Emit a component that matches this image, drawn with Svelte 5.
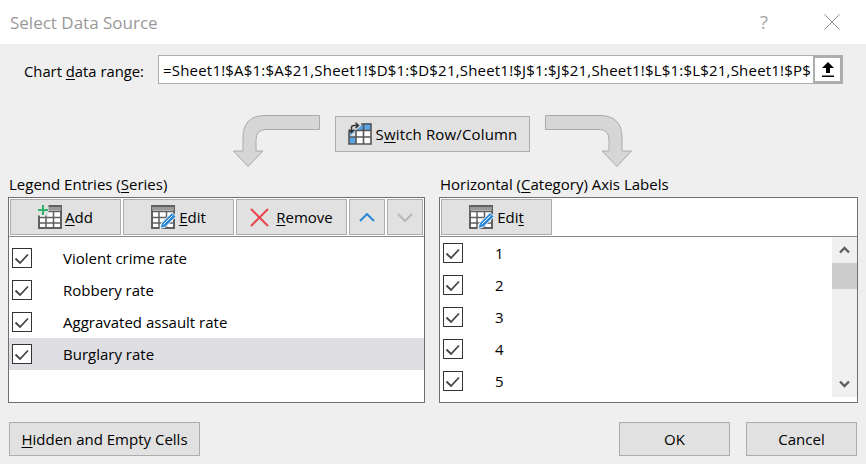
<script>
  const series = ["Violent crime rate", "Robbery rate", "Aggravated assault rate", "Burglary rate"];
  const labels = [1, 2, 3, 4, 5];
  const range = "=Sheet1!$A$1:$A$21,Sheet1!$D$1:$D$21,Sheet1!$J$1:$J$21,Sheet1!$L$1:$L$21,Sheet1!$P$";
</script>

{#snippet check()}
  <svg class="check" width="20" height="20" viewBox="0 0 20 20">
    <rect x="0.5" y="0.5" width="19" height="19" fill="#fff" stroke="#333" />
    <path d="M3.5 10.5 L8 15 L16 6.5" fill="none" stroke="#444" stroke-width="1.8" />
  </svg>
{/snippet}

{#snippet tableIcon()}
  <rect x="1" y="1" width="22" height="22" fill="#fff" stroke="#606060" stroke-width="2" />
  <rect x="1" y="2" width="22" height="3.5" fill="#9a9a9a" />
  <path d="M1 6.5 H23 M1 12.5 H23 M1 18 H23 M8 6 V23 M15.5 6 V23" stroke="#606060" stroke-width="1.5" fill="none" />
{/snippet}

{#snippet pencil()}
  <path d="M9 23.5 L10.5 18 L21 7.5 L25 11.5 L14.5 22 Z" fill="#2b88d8" stroke="#fff" stroke-width="1" />
  <path d="M12.5 19.5 L21.5 10.5" stroke="#fff" stroke-width="1" />
{/snippet}

<div class="dialog">
  <div class="title">
    <span class="title-text">Select Data Source</span>
    <span class="help">?</span>
    <svg class="close" width="16" height="16" viewBox="0 0 16 16">
      <path d="M.5 .5 L15.5 15.5 M15.5 .5 L.5 15.5" stroke="#8c8c8c" fill="none" />
    </svg>
  </div>

  <div class="range-row">
    <span class="range-label">Chart <u>d</u>ata range:</span>
    <div class="range-box">
      <div class="range-text">{range}</div>
      <div class="range-btn">
        <svg width="12" height="15" viewBox="0 0 12 15">
          <path d="M6 0 L12 6 H8 V11 H4 V6 H0 Z" fill="#000" />
          <rect x="0" y="13.5" width="12" height="1.5" fill="#000" />
        </svg>
      </div>
    </div>
  </div>

  <div class="switch-row">
    <svg width="87" height="52" viewBox="0 0 87 52">
      <path d="M86.5 .5 H32 Q10 .5 10 23 V36 H.5 L15 51.5 L30 36 H23 V25 Q23 14.5 33 14.5 H86.5 Z" fill="#d6d6d6" stroke="#aaa" />
    </svg>
    <div class="btn switch-btn">
      <svg width="24" height="24" viewBox="0 0 24 24">
        <rect x="8" y="8" width="15" height="14" fill="#fff" />
        <rect x="1" y="15" width="7" height="7" fill="#5aa5e6" />
        <path d="M1 15 V8 H8 Z" fill="#5aa5e6" />
        <rect x="15.5" y="1" width="7.5" height="7" fill="#5aa5e6" />
        <path d="M15.5 1 V8 H8.5 Z" fill="#5aa5e6" />
        <path d="M1 9 V22 H23 V2 H13 M8 8 V22 M15.5 2 V22 M1 15 H23 M8 8.5 H23" stroke="#555" stroke-width="1.6" fill="none" />
        <path d="M3.5 10 V5.5 Q3.5 3.5 6 3.5 H10 M7.5 .8 L10.5 3.5 L7.5 6.2 M.8 7.5 L3.5 10.5 L6.2 7.5" stroke="#333" stroke-width="1.5" fill="none" />
      </svg>
      <span class="switch-label">S<u>w</u>itch Row/Column</span>
    </div>
    <svg width="87" height="52" viewBox="0 0 87 52">
      <path d="M.5 .5 H55 Q77 .5 77 23 V36 H86.5 L72 51.5 L57 36 H64 V25 Q64 14.5 54 14.5 H.5 Z" fill="#d6d6d6" stroke="#aaa" />
    </svg>
  </div>

  <div class="panels">
    <section class="left">
      <div class="heading">Legend Entries (<u>S</u>eries)</div>
      <div class="panel">
        <div class="toolbar">
          <div class="btn tool">
            <svg width="24" height="24" viewBox="0 0 24 24">
              {@render tableIcon()}
              <rect x="0" y="0" width="10.5" height="10.5" fill="#e1e1e1" />
              <path d="M5 0 V10 M0 5 H10" stroke="#2fb26a" stroke-width="2" />
            </svg>
            <span><u>A</u>dd</span>
          </div>
          <div class="btn tool">
            <svg width="25" height="24" viewBox="0 0 25 24">
              {@render tableIcon()}
              {@render pencil()}
            </svg>
            <span><u>E</u>dit</span>
          </div>
          <div class="btn tool">
            <svg width="19" height="19" viewBox="0 0 19 19">
              <path d="M1 1 L18 18 M18 1 L1 18" stroke="#e8484d" stroke-width="2" fill="none" />
            </svg>
            <span class="remove"><u>R</u>emove</span>
          </div>
          <div class="btn tiny">
            <svg width="16" height="9" viewBox="0 0 16 9">
              <path d="M1 8 L8 1 L15 8" stroke="#2b88d8" stroke-width="2" fill="none" />
            </svg>
          </div>
          <div class="btn tiny">
            <svg width="16" height="9" viewBox="0 0 16 9">
              <path d="M1 1 L8 8 L15 1" stroke="#b9b9b9" stroke-width="2" fill="none" />
            </svg>
          </div>
        </div>
        <div class="list series">
          {#each series as name, i}
            <div class="row" class:selected={i === 3}>
              {@render check()}
              <span class="name">{name}</span>
            </div>
          {/each}
        </div>
      </div>
    </section>

    <section class="right">
      <div class="heading">Horizontal (<u>C</u>ategory) Axis Labels</div>
      <div class="panel">
        <div class="toolbar">
          <div class="btn tool">
            <svg width="25" height="24" viewBox="0 0 25 24">
              {@render tableIcon()}
              {@render pencil()}
            </svg>
            <span>Edi<u>t</u></span>
          </div>
        </div>
        <div class="list-wrap">
          <div class="list labels">
            {#each labels as n}
              <div class="row">
                {@render check()}
                <span class="num">{n}</span>
              </div>
            {/each}
          </div>
          <div class="scrollbar">
            <div class="arrow">
              <svg width="11" height="8" viewBox="0 0 11 8">
                <path d="M1 6.5 L5.5 2 L10 6.5" stroke="#5f5f5f" stroke-width="2.4" fill="none" />
              </svg>
            </div>
            <div class="thumb"></div>
            <div class="arrow down">
              <svg width="11" height="8" viewBox="0 0 11 8">
                <path d="M1 1.5 L5.5 6 L10 1.5" stroke="#5f5f5f" stroke-width="2.4" fill="none" />
              </svg>
            </div>
          </div>
        </div>
      </div>
    </section>
  </div>

  <div class="footer">
    <div class="btn hidden-btn"><span><u>H</u>idden and Empty Cells</span></div>
    <div class="actions">
      <div class="btn action">OK</div>
      <div class="btn action">Cancel</div>
    </div>
  </div>
</div>

<style>
  :global(body) {
    margin: 0;
    background: #efefef;
  }

  .dialog {
    width: 866px;
    height: 464px;
    background: #efefef;
    color: #000;
    font-family: "Open Sans", "Noto Sans", sans-serif;
    font-size: 15px;
    overflow: hidden;
  }

  u {
    text-underline-offset: 2px;
  }

  .title {
    height: 44px;
    background: #fff;
    display: flex;
    align-items: center;
    padding: 0 26px 0 10px;
  }

  .title-text {
    flex: 1;
    font-size: 17px;
    color: #999;
  }

  .help {
    font-size: 19px;
    color: #a6a6a6;
    margin-right: 56px;
  }

  .range-row {
    display: flex;
    align-items: center;
    padding: 11px 23px 0 24px;
  }

  .range-label {
    width: 134px;
    padding-top: 3px;
    font-size: 14.8px;
  }

  .range-box {
    flex: 1;
    height: 29px;
    box-sizing: border-box;
    background: #fff;
    border: 1px solid #adadad;
    display: flex;
    align-items: center;
  }

  .range-text {
    flex: 1;
    padding-left: 4px;
    white-space: nowrap;
    overflow: hidden;
    min-width: 0;
    letter-spacing: 0.2px;
  }

  .range-btn {
    width: 29px;
    height: 27px;
    box-sizing: border-box;
    border: 2px solid #adadad;
    background: #fff;
    display: flex;
    align-items: center;
    justify-content: center;
  }

  .btn {
    background: #e1e1e1;
    border: 1px solid #adadad;
    box-sizing: border-box;
    display: flex;
    align-items: center;
    justify-content: center;
  }

  .switch-row {
    display: flex;
    justify-content: center;
    align-items: flex-start;
    gap: 15px;
    padding: 31px 1px 0 0;
    height: 51px;
  }

  .switch-btn {
    width: 195px;
    height: 36px;
    margin-top: 1px;
    gap: 4px;
  }

  .switch-label {
    letter-spacing: 0.15px;
  }

  .panels {
    display: flex;
    padding: 9px 8px 0;
    gap: 14px;
  }

  .left {
    width: 417px;
  }

  .right {
    width: 419px;
  }

  .heading {
    height: 20px;
    line-height: 18px;
    padding-left: 1px;
    margin-bottom: 2px;
  }

  .panel {
    height: 206px;
    box-sizing: border-box;
    border: 1px solid #6f6f6f;
    background: #fff;
  }

  .toolbar {
    height: 39px;
    box-sizing: border-box;
    border-bottom: 1px solid #8a8a8a;
    padding: 1px;
    display: flex;
    gap: 2px;
  }

  .tool {
    width: 111px;
    height: 36px;
    gap: 3px;
  }

  .tool .remove {
    margin-left: 4px;
  }

  .tiny {
    width: 36px;
    height: 36px;
  }

  .list {
    flex: 1;
    min-width: 0;
  }

  .series {
    padding-top: 5px;
  }

  .row {
    height: 32px;
    display: flex;
    align-items: center;
    padding-left: 3px;
  }

  .selected {
    background: #dfdfe3;
  }

  .check {
    flex: none;
  }

  .name {
    margin-left: 31px;
  }

  .num {
    margin-left: 32px;
  }

  .list-wrap {
    display: flex;
    align-items: flex-start;
  }

  .scrollbar {
    width: 25px;
    height: 160px;
    background: #f0f0f0;
    display: flex;
    flex-direction: column;
  }

  .arrow {
    height: 26px;
    display: flex;
    align-items: center;
    justify-content: center;
  }

  .down {
    margin-top: auto;
  }

  .thumb {
    height: 26px;
    background: #cdcdcd;
  }

  .footer {
    display: flex;
    justify-content: space-between;
    padding: 19px 9px 0;
  }

  .hidden-btn {
    width: 191px;
    height: 34px;
  }

  .actions {
    display: flex;
    gap: 16px;
  }

  .action {
    width: 111px;
    height: 34px;
  }
</style>
